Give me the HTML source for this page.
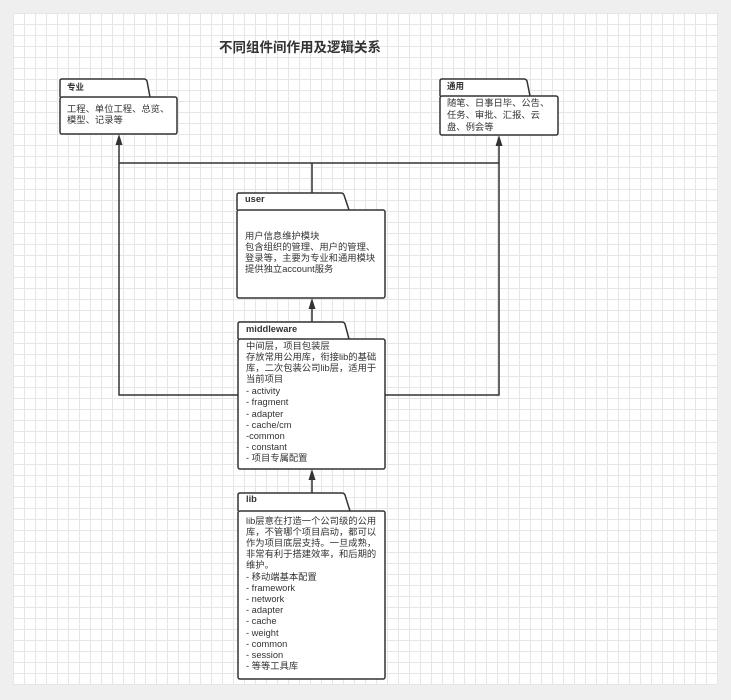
<!DOCTYPE html>
<html><head><meta charset="utf-8"><style>
body{margin:0;width:731px;height:700px;background:#efefef;overflow:hidden;font-family:"Liberation Sans","Noto Sans CJK SC",sans-serif}
.c{position:absolute;left:13px;top:13px;width:705px;height:672px;background-color:#fff;
background-image:linear-gradient(#e6e6e6 1px,transparent 1px),linear-gradient(90deg,#e6e6e6 1px,transparent 1px);background-size:11px 11px}
svg{position:absolute;left:0;top:0}
text{font-family:"Liberation Sans","Noto Sans CJK SC",sans-serif;font-size:9.3px;fill:#333}
.b{font-weight:bold}
</style></head><body>
<div class="c"></div>
<svg width="731" height="700">
<g stroke="#333" stroke-width="1.5" fill="none">
<path d="M119,163 H499 M312,163 V193"/>
<path d="M238,395 H119 V140"/>
<path d="M385,395 H499 V141"/>
<path d="M312,322 V304"/>
<path d="M312,493 V475"/>
</g>
<g fill="#333">
<path d="M119,134 L122.5,145 L115.5,145 Z"/>
<path d="M499,135 L502.5,146 L495.5,146 Z"/>
<path d="M312,298 L315.5,309 L308.5,309 Z"/>
<path d="M312,469 L315.5,480 L308.5,480 Z"/>
</g>
<g stroke="#333" stroke-width="1.5" fill="#fff">
<path d="M60,97 V81 Q60,79 62,79 H144 Q146,79 147,81 L150,97"/><rect x="60" y="97" width="117" height="37" rx="2"/>
<path d="M440,96 V81 Q440,79 442,79 H524 Q526,79 527,81 L530,96"/><rect x="440" y="96" width="118" height="39" rx="2"/>
<path d="M237,210 V195 Q237,193 239,193 H341 Q343,193 344,195 L349,210"/><rect x="237" y="210" width="148" height="88" rx="2"/>
<path d="M238,339 V324 Q238,322 240,322 H342 Q344,322 345,324 L349,339"/><rect x="238" y="339" width="147" height="130" rx="2"/>
<path d="M238,511 V495 Q238,493 240,493 H342 Q344,493 345,495 L350,511"/><rect x="238" y="511" width="147" height="168" rx="2"/>
</g>
<text x="300" y="52" text-anchor="middle" class="b" style="font-size:13.5px">不同组件间作用及逻辑关系</text>
<text x="67" y="90" class="b" style="font-size:8.5px">专业</text>
<text x="67" y="112">工程、单位工程、总览、</text><text x="67" y="123">模型、记录等</text>
<text x="447" y="89" class="b" style="font-size:8.5px">通用</text>
<text x="447" y="106">随笔、日事日毕、公告、</text><text x="447" y="118">任务、审批、汇报、云</text><text x="447" y="130">盘、例会等</text>
<text x="245" y="202" class="b">user</text>
<text x="245" y="239">用户信息维护模块</text><text x="245" y="250">包含组织的管理、用户的管理、</text><text x="245" y="261">登录等，主要为专业和通用模块</text><text x="245" y="272">提供独立account服务</text>
<text x="246" y="332" class="b">middleware</text>
<g><text x="246" y="349">中间层，项目包装层</text><text x="246" y="360">存放常用公用库，衔接lib的基础</text><text x="246" y="371">库，二次包装公司lib层，适用于</text><text x="246" y="382">当前项目</text><text x="246" y="394">- activity</text><text x="246" y="405">- fragment</text><text x="246" y="417">- adapter</text><text x="246" y="428">- cache/cm</text><text x="246" y="439">-common</text><text x="246" y="450">- constant</text><text x="246" y="461">- 项目专属配置</text></g>
<text x="246" y="502" class="b">lib</text>
<g><text x="246" y="524">lib层意在打造一个公司级的公用</text><text x="246" y="535">库，不管哪个项目启动，都可以</text><text x="246" y="546">作为项目底层支持。一旦成熟，</text><text x="246" y="557">非常有利于搭建效率，和后期的</text><text x="246" y="568">维护。</text><text x="246" y="580">- 移动端基本配置</text><text x="246" y="591">- framework</text><text x="246" y="602">- network</text><text x="246" y="613">- adapter</text><text x="246" y="624">- cache</text><text x="246" y="636">- weight</text><text x="246" y="647">- common</text><text x="246" y="658">- session</text><text x="246" y="669">- 等等工具库</text></g>
</svg>
</body></html>
